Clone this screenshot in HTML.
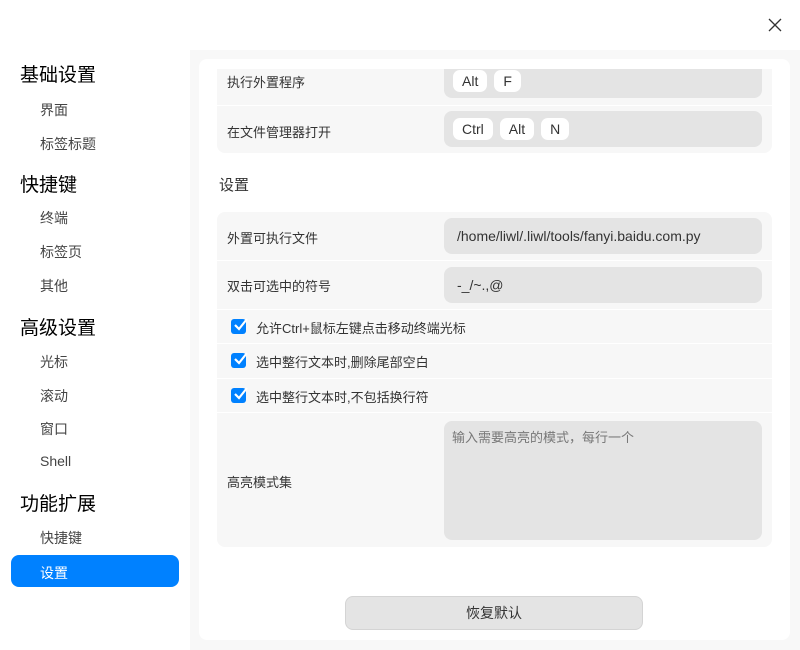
<!DOCTYPE html>
<html><head><meta charset="utf-8"><style>
*{box-sizing:border-box;margin:0;padding:0}
body{width:800px;height:650px;overflow:hidden;background:#fff;font-family:"Liberation Sans","Noto Sans CJK SC",sans-serif;color:#333;position:relative}
.abs{position:absolute}
.h{font-size:19px;color:#000;left:20px}
.s{font-size:14px;left:40px;color:#444}
.sel{left:11px;top:555px;width:168px;height:32px;background:#0081ff;border-radius:8px}
.panel{left:190px;top:50px;width:610px;height:600px;background:#f8f8f8}
.card{left:199px;top:59px;width:591px;height:581px;background:#fff;border-radius:8px;overflow:hidden}
.grp{position:absolute;left:18px;width:555px;background:#f7f7f7;border-radius:8px}
.row{position:absolute;left:0;width:555px;border-bottom:1px solid #fff}
.lbl{position:absolute;left:10px;font-size:13px;color:#333}
.inp{position:absolute;left:227px;width:318px;background:#e4e4e4;border-radius:8px;font-size:14px;color:#333}
.key{display:inline-block;background:#fff;border-radius:7px;height:22px;line-height:22px;padding:0 9px;font-size:14px;margin-right:7px}
.cb{position:absolute;left:14px;width:15px;height:15px;background:#0081ff;border-radius:3px}
</style></head><body>
<svg class="abs" style="left:768px;top:18px" width="14" height="14"><path d="M1 1L13 13M13 1L1 13" stroke="#333" stroke-width="1.3"/></svg>
<div class="abs sel"></div>
<div class="abs h" style="top:60px">基础设置</div>
<div class="abs s" style="top:100px">界面</div>
<div class="abs s" style="top:134px">标签标题</div>
<div class="abs h" style="top:170px">快捷键</div>
<div class="abs s" style="top:208px">终端</div>
<div class="abs s" style="top:242px">标签页</div>
<div class="abs s" style="top:276px">其他</div>
<div class="abs h" style="top:313px">高级设置</div>
<div class="abs s" style="top:352px">光标</div>
<div class="abs s" style="top:386px">滚动</div>
<div class="abs s" style="top:419px">窗口</div>
<div class="abs s" style="top:453px">Shell</div>
<div class="abs h" style="top:489px">功能扩展</div>
<div class="abs s" style="top:528px">快捷键</div>
<div class="abs s" style="top:563px;color:#fff">设置</div>
<div class="abs panel"></div>
<div class="abs card">
 <div class="abs" style="left:0;top:10px;width:591px;height:84px;overflow:hidden">
 <div class="grp" style="top:-20px;height:104px">
  <div class="row" style="top:0;height:57px"><div class="lbl" style="top:23px">执行外置程序</div>
   <div class="inp" style="top:8px;height:41px;padding:13px 0 0 9px"><span class="key">Alt</span><span class="key">F</span></div></div>
  <div class="row" style="top:57px;height:47px;border:none"><div class="lbl" style="top:16px">在文件管理器打开</div>
   <div class="inp" style="top:5px;height:36px;padding:7px 0 0 9px"><span class="key">Ctrl</span><span class="key">Alt</span><span class="key">N</span></div></div>
 </div>
 </div>
 <div class="abs" style="left:20px;top:115px;font-size:15px;color:#333">设置</div>
 <div class="grp" style="top:153px;height:335px">
  <div class="row" style="top:0;height:49px"><div class="lbl" style="top:16px">外置可执行文件</div>
   <div class="inp" style="top:6px;height:36px;line-height:36px;padding-left:13px">/home/liwl/.liwl/tools/fanyi.baidu.com.py</div></div>
  <div class="row" style="top:49px;height:49px"><div class="lbl" style="top:15px">双击可选中的符号</div>
   <div class="inp" style="top:6px;height:36px;line-height:36px;padding-left:13px">-_/~.,@</div></div>
  <div class="row" style="top:98px;height:34px"><div class="cb" style="top:9px"></div><svg class="abs" style="left:14px;top:4px" width="20" height="20"><path d="M4 11l4 4 8-10" stroke="#fff" stroke-width="2.2" fill="none"/></svg><div class="lbl" style="left:39px;top:8px">允许Ctrl+鼠标左键点击移动终端光标</div></div>
  <div class="row" style="top:132px;height:35px"><div class="cb" style="top:9px"></div><svg class="abs" style="left:14px;top:4px" width="20" height="20"><path d="M4 11l4 4 8-10" stroke="#fff" stroke-width="2.2" fill="none"/></svg><div class="lbl" style="left:39px;top:8px">选中整行文本时,删除尾部空白</div></div>
  <div class="row" style="top:167px;height:34px"><div class="cb" style="top:9px"></div><svg class="abs" style="left:14px;top:4px" width="20" height="20"><path d="M4 11l4 4 8-10" stroke="#fff" stroke-width="2.2" fill="none"/></svg><div class="lbl" style="left:39px;top:8px">选中整行文本时,不包括换行符</div></div>
  <div class="row" style="top:201px;height:134px;border:none"><div class="lbl" style="top:59px">高亮模式集</div>
   <div class="inp" style="top:8px;height:119px;padding:6px 8px;font-size:13px;color:#777">输入需要高亮的模式，每行一个</div></div>
 </div>
 <div class="abs" style="left:146px;top:537px;width:298px;height:34px;background:#e4e4e4;border:1px solid #d4d4d4;border-radius:8px;text-align:center;line-height:32px;font-size:14px;color:#333">恢复默认</div>
</div>
</body></html>
